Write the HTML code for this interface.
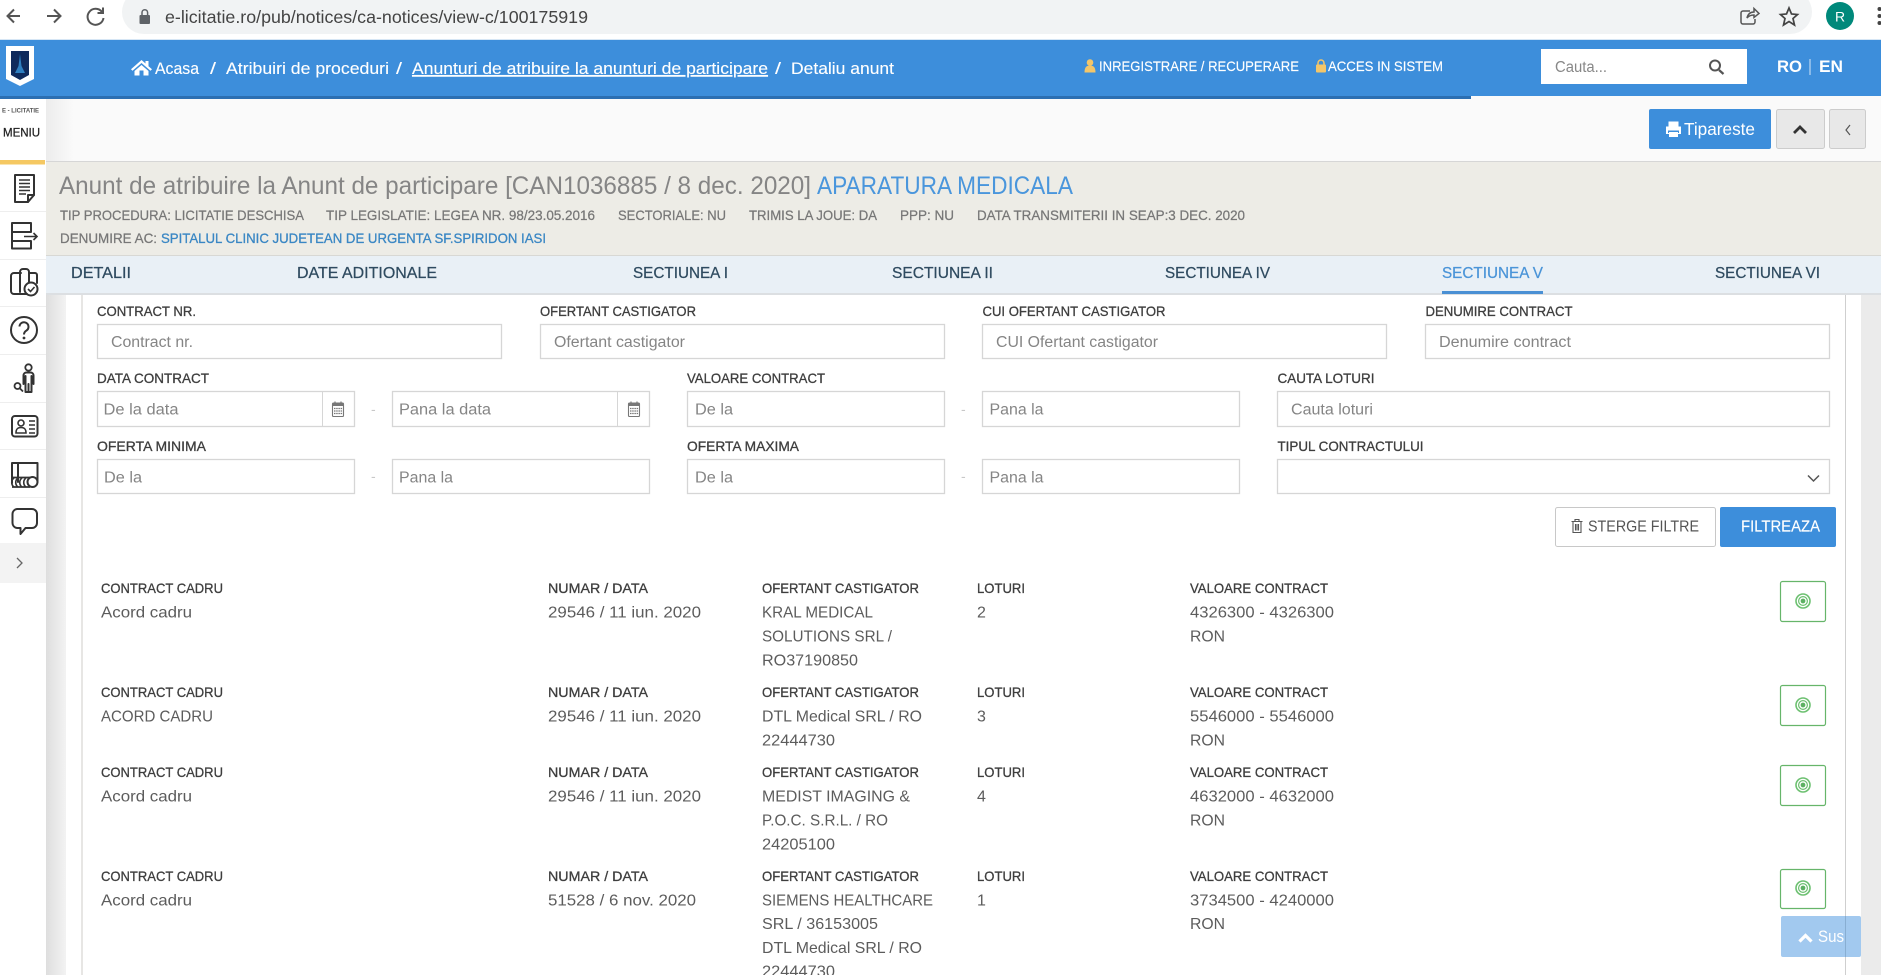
<!DOCTYPE html>
<html lang="ro">
<head>
<meta charset="utf-8">
<title>Detaliu anunt</title>
<style>
html,body{margin:0;padding:0;width:1881px;height:975px;overflow:hidden;background:#fff}
svg{display:block}
text{font-family:"Liberation Sans",sans-serif}
.b{fill:#fff;font-size:17px;stroke:#fff;stroke-width:.12}
.top{fill:#fff;font-size:14px;stroke:#fff;stroke-width:.15}
.i{fill:#777;font-size:14px;stroke:#777;stroke-width:.25}
.tab{fill:#2f4b60;font-size:16px;stroke:#2f4b60;stroke-width:.25}
.l{fill:#3e3e3e;font-size:14px;stroke:#3e3e3e;stroke-width:.3}
.v{fill:#5c5c5c;font-size:16px}
.p{fill:#858585;font-size:15.5px}
.box{fill:#fff;stroke:#d6d6d6;stroke-width:1.3}
.g{fill:#fff;stroke:#66b56a;stroke-width:1.2}
.ic{fill:none;stroke:#333;stroke-width:2;stroke-linejoin:round;stroke-linecap:round}
.sep{stroke:#eee;stroke-width:1}
</style>
</head>
<body>
<svg width="1881" height="975" viewBox="0 0 1881 975" xmlns="http://www.w3.org/2000/svg">
<defs>
<linearGradient id="gut" x1="0" x2="1" y1="0" y2="0"><stop offset="0" stop-color="#dedede"/><stop offset="1" stop-color="#f3f3f3"/></linearGradient>
<linearGradient id="tb" x1="0" x2="1" y1="0" y2="0"><stop offset="0" stop-color="#ececec"/><stop offset=".015" stop-color="#fafafa"/><stop offset="1" stop-color="#fafafa"/></linearGradient>
<g id="tgt"><circle r="7" fill="none" stroke="#6cc070" stroke-width="1.6"/><circle r="4.4" fill="none" stroke="#6cc070" stroke-width="1.2"/><circle r="2.4" fill="#5cb062"/></g>
<g id="cal"><rect x="332.500" y="403" width="11" height="13.500" rx="1" fill="none" stroke="#777" stroke-width="1.100"/><rect x="332.500" y="403" width="11" height="3" fill="#777"/><path d="M334 408.500H342.500M334 411H342.500M334 413.500H342.500" stroke="#777" stroke-width="1.300" stroke-dasharray="1.500 .7"/><path d="M335 403V401.500M341 403V401.500" stroke="#777" stroke-width="1.200"/></g>
</defs>

<!-- browser chrome -->
<rect width="1881" height="40" fill="#fff"/>
<rect x="122" y="-10" width="1690" height="44" rx="22" fill="#f1f3f4"/>
<path d="M20 16H8M14 9.500L7.500 16L14 22.500" fill="none" stroke="#555" stroke-width="2"/>
<path d="M47 16H60M54 9.500L60.500 16L54 22.500" fill="none" stroke="#555" stroke-width="2"/>
<path d="M102 12A8 8 0 1 0 103.500 18M103 7.500V13H97.500" fill="none" stroke="#555" stroke-width="2"/>
<rect x="139.500" y="15" width="10.500" height="9" rx="1" fill="#5f6368"/><path d="M142 15V12.500a2.800 2.800 0 0 1 5.600 0V15" fill="none" stroke="#5f6368" stroke-width="1.500"/>
<text x="165" y="23" textLength="423" lengthAdjust="spacingAndGlyphs" font-size="17.500" fill="#444">e-licitatie.ro/pub/notices/ca-notices/view-c/100175919</text>
<path d="M1750 11H1743a2 2 0 0 0-2 2V22a2 2 0 0 0 2 2H1753a2 2 0 0 0 2-2V19M1747 18C1748 13.500 1751 12 1754 12V8.500L1759 13.500L1754 17.500V15C1751 15 1749 15.500 1747 18Z" fill="none" stroke="#555" stroke-width="1.500"/>
<path d="M1789 8L1791.500 14L1797.500 14.500L1793 18.500L1794.500 25L1789 21.500L1783.500 25L1785 18.500L1780.500 14.500L1786.500 14Z" fill="none" stroke="#444" stroke-width="1.700"/>
<circle cx="1840" cy="16" r="14" fill="#00897b"/>
<text x="1840" y="21.500" text-anchor="middle" font-size="14" fill="#fff">R</text>
<circle cx="1879.500" cy="9" r="2" fill="#444"/><circle cx="1879.500" cy="16" r="2" fill="#444"/><circle cx="1879.500" cy="23" r="2" fill="#444"/>

<!-- blue header -->
<rect y="39" width="1881" height="1" fill="#d6e6f5"/>
<rect y="40" width="1881" height="56" fill="#3d8edb"/>
<rect y="96" width="1471" height="3" fill="#2c6fb2"/>
<path d="M6 46H34V79L20 86L6 79Z" fill="#fff"/>
<path d="M11 51H29V75L20 80L11 75Z" fill="#0f2a5c"/>
<path d="M20 54L21.500 66L25 73H15L18.500 66Z" fill="#2f7fc0"/>
<path d="M141.500 60L145.500 63.500V61H148.500V66.200L152 69.300L150.500 70.800L141.500 63L132.500 70.800L131 69.300Z M134.500 71L141.500 65L148.500 71V75.500H143.500V70.500H139.500V75.500H134.500Z" fill="#fff"/>
<text class="b" x="155" y="74" textLength="44" lengthAdjust="spacingAndGlyphs">Acasa</text>
<text class="b" x="210" y="74" textLength="6" lengthAdjust="spacingAndGlyphs">/</text>
<text class="b" x="226" y="74" textLength="163" lengthAdjust="spacingAndGlyphs">Atribuiri de proceduri</text>
<text class="b" x="396" y="74" textLength="6" lengthAdjust="spacingAndGlyphs">/</text>
<text class="b" x="412" y="74" textLength="356" lengthAdjust="spacingAndGlyphs" text-decoration="underline">Anunturi de atribuire la anunturi de participare</text>
<text class="b" x="775" y="74" textLength="6" lengthAdjust="spacingAndGlyphs">/</text>
<text class="b" x="791" y="74" textLength="103" lengthAdjust="spacingAndGlyphs">Detaliu anunt</text>

<circle cx="1090" cy="62.500" r="3.300" fill="#f3c66a"/><path d="M1084.500 72.500C1084.500 67 1086.500 65.500 1090 65.500C1093.500 65.500 1095.500 67 1095.500 72.500Z" fill="#f3c66a"/>
<text class="top" x="1099" y="71" textLength="200" lengthAdjust="spacingAndGlyphs">INREGISTRARE / RECUPERARE</text>
<rect x="1316" y="64.500" width="10" height="8" rx="1" fill="#f3c66a"/><path d="M1318 65V63a3 3 0 0 1 6 0V65" fill="none" stroke="#f3c66a" stroke-width="1.500"/>
<text class="top" x="1328" y="71" textLength="115" lengthAdjust="spacingAndGlyphs">ACCES IN SISTEM</text>
<rect x="1541" y="49" width="206" height="35" fill="#fff"/>
<text x="1555" y="72" textLength="52" lengthAdjust="spacingAndGlyphs" font-size="15.500" fill="#888">Cauta...</text>
<circle cx="1715" cy="65.500" r="5" fill="none" stroke="#555" stroke-width="2"/><path d="M1719 70L1723.500 74" stroke="#555" stroke-width="2.200"/>
<text x="1777" y="72" textLength="25" lengthAdjust="spacingAndGlyphs" font-size="17" font-weight="700" fill="#fff">RO</text>
<rect x="1809.500" y="59" width="1" height="16" fill="#d5e6f7"/>
<text x="1819" y="72" textLength="24" lengthAdjust="spacingAndGlyphs" font-size="17" font-weight="700" fill="#fff">EN</text>

<!-- sidebar and gutters backgrounds -->
<rect x="46" y="99" width="1835" height="63" fill="url(#tb)"/>
<rect x="1471" y="96" width="410" height="3" fill="#fafafa"/>
<rect x="46" y="161" width="1835" height="1.500" fill="#d6d6d6"/>
<rect x="46" y="295" width="20" height="680" fill="url(#gut)"/>
<rect x="66" y="295" width="1795" height="680" fill="#fff"/>
<rect x="1861" y="295" width="20" height="680" fill="#ebebeb"/>
<rect x="81.500" y="293" width="1" height="682" fill="#cfcdc8"/>
<rect x="1845" y="293" width="1" height="682" fill="#cfcfcf"/>

<!-- toolbar -->
<rect x="1649" y="109" width="122" height="40" rx="2" fill="#3d8edb"/>
<path d="M1669 127V122H1678V127M1666.500 127H1680.500V133.500H1666.500Z" fill="#fff" stroke="#fff" stroke-width="1"/>
<rect x="1668" y="130.500" width="11" height="2.500" fill="#3d8edb"/>
<rect x="1669" y="132" width="9" height="5" fill="#fff"/>
<text x="1684" y="135" textLength="71" lengthAdjust="spacingAndGlyphs" font-size="17.500" fill="#fff">Tipareste</text>
<rect x="1776.500" y="109.500" width="48" height="39" rx="2" fill="#e8e8e8" stroke="#ccc"/>
<path d="M1794 133L1800 127L1806 133" fill="none" stroke="#333" stroke-width="2.800"/>
<rect x="1829.500" y="109.500" width="36" height="39" rx="2" fill="#e8e8e8" stroke="#ccc"/>
<path d="M1850 125L1846 130L1850 135" fill="none" stroke="#555" stroke-width="1.200"/>

<!-- title bar -->
<rect x="46" y="162" width="1835" height="93" fill="#edece6"/>
<text x="59" y="194" textLength="752" lengthAdjust="spacingAndGlyphs" font-size="25" fill="#858585">Anunt de atribuire la Anunt de participare [CAN1036885 / 8 dec. 2020]</text>
<text x="817" y="194" textLength="256" lengthAdjust="spacingAndGlyphs" font-size="25" fill="#4a96dc">APARATURA MEDICALA</text>
<text class="i" x="60" y="220" textLength="244" lengthAdjust="spacingAndGlyphs">TIP PROCEDURA: LICITATIE DESCHISA</text>
<text class="i" x="326" y="220" textLength="269" lengthAdjust="spacingAndGlyphs">TIP LEGISLATIE: LEGEA NR. 98/23.05.2016</text>
<text class="i" x="618" y="220" textLength="108" lengthAdjust="spacingAndGlyphs">SECTORIALE: NU</text>
<text class="i" x="749" y="220" textLength="128" lengthAdjust="spacingAndGlyphs">TRIMIS LA JOUE: DA</text>
<text class="i" x="900" y="220" textLength="54" lengthAdjust="spacingAndGlyphs">PPP: NU</text>
<text class="i" x="977" y="220" textLength="268" lengthAdjust="spacingAndGlyphs">DATA TRANSMITERII IN SEAP:3 DEC. 2020</text>
<text class="i" x="60" y="243" textLength="97" lengthAdjust="spacingAndGlyphs">DENUMIRE AC:</text>
<text x="161" y="243" textLength="385" lengthAdjust="spacingAndGlyphs" font-size="14" fill="#3a87c4" stroke="#3a87c4" stroke-width=".3">SPITALUL CLINIC JUDETEAN DE URGENTA SF.SPIRIDON IASI</text>

<!-- tabs -->
<rect x="46" y="255" width="1835" height="1" fill="#d8d8d4"/>
<rect x="46" y="256" width="1835" height="37" fill="#e9f0f6"/>
<rect x="46" y="293" width="1835" height="2" fill="#dcdfe2"/>
<text class="tab" x="71" y="278" textLength="60" lengthAdjust="spacingAndGlyphs">DETALII</text>
<text class="tab" x="297" y="278" textLength="140" lengthAdjust="spacingAndGlyphs">DATE ADITIONALE</text>
<text class="tab" x="633" y="278" textLength="95" lengthAdjust="spacingAndGlyphs">SECTIUNEA I</text>
<text class="tab" x="892" y="278" textLength="101" lengthAdjust="spacingAndGlyphs">SECTIUNEA II</text>
<text class="tab" x="1165" y="278" textLength="105" lengthAdjust="spacingAndGlyphs">SECTIUNEA IV</text>
<text x="1442" y="278" textLength="101" lengthAdjust="spacingAndGlyphs" font-size="16" fill="#4a94d8" stroke="#4a94d8" stroke-width=".25">SECTIUNEA V</text>
<text class="tab" x="1715" y="278" textLength="105" lengthAdjust="spacingAndGlyphs">SECTIUNEA VI</text>
<rect x="1442" y="291" width="101" height="3" fill="#4a90d4"/>

<!-- sidebar -->
<rect x="0" y="99" width="46" height="876" fill="#fff"/>
<text x="2" y="112.500" textLength="37" lengthAdjust="spacingAndGlyphs" font-size="6" font-weight="700" fill="#555">E - LICITATIE</text>
<text x="3" y="136.500" textLength="37" lengthAdjust="spacingAndGlyphs" font-size="11.500" fill="#222" stroke="#222" stroke-width=".25">MENIU</text>
<rect x="0" y="160" width="45" height="4.500" fill="#f5c862"/>
<path class="sep" d="M0 211.500H46M0 259.500H46M0 306.500H46M0 354.500H46M0 402.500H46M0 449.500H46M0 497.500H46"/>
<rect x="0" y="543" width="46" height="40" fill="#f3f3f3"/>
<path d="M17 558L22 563L17 568" fill="none" stroke="#666" stroke-width="1.300"/>
<!-- icon 1 doc -->
<path class="ic" d="M15 175H34V195L28 202H15Z"/><path class="ic" d="M28 202V195H34" stroke-width="1.500"/>
<path d="M19 180H30M19 183.500H30M19 187H30M19 190.500H30M19 194H26" stroke="#333" stroke-width="1.500"/>
<!-- icon 2 -->
<path class="ic" d="M12 223H31V232H12ZM12 232H29M12 232V241H29M12 241V248.500H31V241H29"/>
<path d="M24 236.500H37M33.500 233L37 236.500L33.500 240" fill="none" stroke="#333" stroke-width="1.600"/>
<!-- icon 3 -->
<path class="ic" d="M21 273H14A3 3 0 0 0 11 276V291A3 3 0 0 0 14 294H27M29 273H35A2 2 0 0 1 37 275V283"/>
<path class="ic" d="M20 292V272A3 3 0 0 1 23 269H26A3 3 0 0 1 29 272V282"/>
<circle class="ic" cx="31" cy="289" r="6.500"/><path d="M28 289L30.500 291.500L34.500 287" fill="none" stroke="#333" stroke-width="1.600"/>
<!-- icon 4 -->
<circle cx="24" cy="330" r="13" fill="none" stroke="#333" stroke-width="2"/>
<path d="M19.500 326.500A4.500 4.500 0 1 1 26.500 330.500C24.800 331.500 24 332.500 24 334.500" fill="none" stroke="#333" stroke-width="2"/><circle cx="24" cy="338" r="1.400" fill="#333"/>
<!-- icon 5 -->
<circle cx="28.500" cy="367.500" r="3.200" fill="none" stroke="#333" stroke-width="1.800"/>
<path class="ic" d="M23.500 384V375.500A3 3 0 0 1 26.500 372.500H30.500A3 3 0 0 1 33.500 375.500V384M25.500 376V392H31.500V376M28.500 384V392" stroke-width="1.700"/>
<circle cx="17.500" cy="386" r="3" fill="none" stroke="#333" stroke-width="1.800"/><path d="M20 388.500L23 391.500" stroke="#333" stroke-width="1.800"/>
<!-- icon 6 -->
<rect class="ic" x="12" y="416" width="25.500" height="20.500" rx="3"/>
<circle cx="21" cy="423" r="3" fill="none" stroke="#333" stroke-width="1.600"/>
<path d="M16 433C16 428.500 18 427.500 21 427.500C24 427.500 26 428.500 26 433Z" fill="none" stroke="#333" stroke-width="1.600"/>
<path d="M29 421H35M29 425H35M29 429H35M29 433H35" stroke="#333" stroke-width="1.500"/>
<!-- icon 7 -->
<path class="ic" d="M12 483V463H37.500V482M18 463V482"/>
<path d="M12 477.500H30" stroke="#333" stroke-width="1.800"/>
<path d="M14 478C11 480 11 485 14 487M18 478C15 480 15 485 18 487M22 478C19 480 19 485 22 487M26 478C23 480 23 485 26 487" fill="none" stroke="#333" stroke-width="1.600"/>
<circle cx="32.500" cy="482" r="5" fill="none" stroke="#333" stroke-width="2"/>
<path d="M12 487H30" stroke="#333" stroke-width="1.800"/>
<!-- icon 8 -->
<path class="ic" d="M17 509H32A5 5 0 0 1 37 514V523A5 5 0 0 1 32 528H25.500L20.500 534V528H17A5 5 0 0 1 12.500 523V514A5 5 0 0 1 17 509Z"/>

<!-- filter row 1 -->
<text class="l" x="97" y="316" textLength="99" lengthAdjust="spacingAndGlyphs">CONTRACT NR.</text>
<text class="l" x="540" y="316" textLength="156" lengthAdjust="spacingAndGlyphs">OFERTANT CASTIGATOR</text>
<text class="l" x="982.500" y="316" textLength="183" lengthAdjust="spacingAndGlyphs">CUI OFERTANT CASTIGATOR</text>
<text class="l" x="1425.500" y="316" textLength="147" lengthAdjust="spacingAndGlyphs">DENUMIRE CONTRACT</text>
<rect class="box" x="97.500" y="324.500" width="404" height="34"/>
<rect class="box" x="540.500" y="324.500" width="404" height="34"/>
<rect class="box" x="982.500" y="324.500" width="404" height="34"/>
<rect class="box" x="1425.500" y="324.500" width="404" height="34"/>
<text class="p" x="111" y="347" textLength="82" lengthAdjust="spacingAndGlyphs">Contract nr.</text>
<text class="p" x="554" y="347" textLength="131" lengthAdjust="spacingAndGlyphs">Ofertant castigator</text>
<text class="p" x="996" y="347" textLength="162" lengthAdjust="spacingAndGlyphs">CUI Ofertant castigator</text>
<text class="p" x="1439" y="347" textLength="132" lengthAdjust="spacingAndGlyphs">Denumire contract</text>

<!-- filter row 2 -->
<text class="l" x="97" y="383" textLength="112" lengthAdjust="spacingAndGlyphs">DATA CONTRACT</text>
<text class="l" x="687" y="383" textLength="138" lengthAdjust="spacingAndGlyphs">VALOARE CONTRACT</text>
<text class="l" x="1277.500" y="383" textLength="97" lengthAdjust="spacingAndGlyphs">CAUTA LOTURI</text>
<rect class="box" x="97.500" y="391.500" width="257" height="35"/>
<path d="M322.500 392V426" stroke="#d6d6d6"/>
<rect class="box" x="392.500" y="391.500" width="257" height="35"/>
<path d="M617.500 392V426" stroke="#d6d6d6"/>
<rect class="box" x="687.500" y="391.500" width="257" height="35"/>
<rect class="box" x="982.500" y="391.500" width="257" height="35"/>
<rect class="box" x="1277.500" y="391.500" width="552" height="35"/>
<use href="#cal"/>
<use href="#cal" x="296"/>
<text x="371" y="414" font-size="14" fill="#c8c8c8">-</text>
<text x="961" y="414" font-size="14" fill="#c8c8c8">-</text>
<text class="p" x="103.500" y="414.500" textLength="75" lengthAdjust="spacingAndGlyphs">De la data</text>
<text class="p" x="399" y="414.500" textLength="92" lengthAdjust="spacingAndGlyphs">Pana la data</text>
<text class="p" x="695" y="414.500" textLength="38" lengthAdjust="spacingAndGlyphs">De la</text>
<text class="p" x="989.500" y="414.500" textLength="54" lengthAdjust="spacingAndGlyphs">Pana la</text>
<text class="p" x="1291" y="414.500" textLength="82" lengthAdjust="spacingAndGlyphs">Cauta loturi</text>

<!-- filter row 3 -->
<text class="l" x="97" y="451" textLength="109" lengthAdjust="spacingAndGlyphs">OFERTA MINIMA</text>
<text class="l" x="687" y="451" textLength="112" lengthAdjust="spacingAndGlyphs">OFERTA MAXIMA</text>
<text class="l" x="1277.500" y="451" textLength="146" lengthAdjust="spacingAndGlyphs">TIPUL CONTRACTULUI</text>
<rect class="box" x="97.500" y="459.500" width="257" height="34"/>
<rect class="box" x="392.500" y="459.500" width="257" height="34"/>
<rect class="box" x="687.500" y="459.500" width="257" height="34"/>
<rect class="box" x="982.500" y="459.500" width="257" height="34"/>
<rect class="box" x="1277.500" y="459.500" width="552" height="34"/>
<text x="371" y="481" font-size="14" fill="#c8c8c8">-</text>
<text x="961" y="481" font-size="14" fill="#c8c8c8">-</text>
<text class="p" x="104" y="482.500" textLength="38" lengthAdjust="spacingAndGlyphs">De la</text>
<text class="p" x="399" y="482.500" textLength="54" lengthAdjust="spacingAndGlyphs">Pana la</text>
<text class="p" x="695" y="482.500" textLength="38" lengthAdjust="spacingAndGlyphs">De la</text>
<text class="p" x="989.500" y="482.500" textLength="54" lengthAdjust="spacingAndGlyphs">Pana la</text>
<path d="M1808 475.500L1813.500 481L1819 475.500" fill="none" stroke="#555" stroke-width="1.500"/>

<!-- buttons -->
<rect x="1555.500" y="507.500" width="160" height="39" rx="2" fill="#fff" stroke="#c8c8c8"/>
<path d="M1571.500 521.500H1582.500M1573 521.500V532.500H1581V521.500M1575 521V519.500H1579V521M1575.500 524V530.500M1577 524V530.500M1578.500 524V530.500" fill="none" stroke="#555" stroke-width="1.100"/>
<text x="1588" y="531.500" textLength="111" lengthAdjust="spacingAndGlyphs" font-size="16" fill="#555">STERGE FILTRE</text>
<rect x="1720" y="507" width="116" height="40" rx="2" fill="#3d8edb"/>
<text x="1741" y="531.500" textLength="79" lengthAdjust="spacingAndGlyphs" font-size="16" fill="#fff" stroke="#fff" stroke-width=".15">FILTREAZA</text>

<!-- row 1 -->
<text class="l" x="101" y="593" textLength="122" lengthAdjust="spacingAndGlyphs">CONTRACT CADRU</text>
<text class="v" x="101" y="617.500" textLength="91" lengthAdjust="spacingAndGlyphs">Acord cadru</text>
<text class="l" x="548" y="593" textLength="100" lengthAdjust="spacingAndGlyphs">NUMAR / DATA</text>
<text class="v" x="548" y="617.500" textLength="153" lengthAdjust="spacingAndGlyphs">29546 / 11 iun. 2020</text>
<text class="l" x="762" y="593" textLength="157" lengthAdjust="spacingAndGlyphs">OFERTANT CASTIGATOR</text>
<text class="v" x="762" y="617.500" textLength="111" lengthAdjust="spacingAndGlyphs">KRAL MEDICAL</text>
<text class="v" x="762" y="641.500" textLength="130" lengthAdjust="spacingAndGlyphs">SOLUTIONS SRL /</text>
<text class="v" x="762" y="665.500" textLength="96" lengthAdjust="spacingAndGlyphs">RO37190850</text>
<text class="l" x="977" y="593" textLength="48" lengthAdjust="spacingAndGlyphs">LOTURI</text>
<text class="v" x="977" y="617.500">2</text>
<text class="l" x="1190" y="593" textLength="138" lengthAdjust="spacingAndGlyphs">VALOARE CONTRACT</text>
<text class="v" x="1190" y="617.500" textLength="144" lengthAdjust="spacingAndGlyphs">4326300 - 4326300</text>
<text class="v" x="1190" y="641.500" textLength="35" lengthAdjust="spacingAndGlyphs">RON</text>
<rect class="g" x="1780.500" y="581.500" width="45" height="40" rx="2"/>
<use href="#tgt" x="1803" y="601"/>

<!-- row 2 -->
<text class="l" x="101" y="697" textLength="122" lengthAdjust="spacingAndGlyphs">CONTRACT CADRU</text>
<text class="v" x="101" y="721.500" textLength="112" lengthAdjust="spacingAndGlyphs">ACORD CADRU</text>
<text class="l" x="548" y="697" textLength="100" lengthAdjust="spacingAndGlyphs">NUMAR / DATA</text>
<text class="v" x="548" y="721.500" textLength="153" lengthAdjust="spacingAndGlyphs">29546 / 11 iun. 2020</text>
<text class="l" x="762" y="697" textLength="157" lengthAdjust="spacingAndGlyphs">OFERTANT CASTIGATOR</text>
<text class="v" x="762" y="721.500" textLength="160" lengthAdjust="spacingAndGlyphs">DTL Medical SRL / RO</text>
<text class="v" x="762" y="745.500" textLength="73" lengthAdjust="spacingAndGlyphs">22444730</text>
<text class="l" x="977" y="697" textLength="48" lengthAdjust="spacingAndGlyphs">LOTURI</text>
<text class="v" x="977" y="721.500">3</text>
<text class="l" x="1190" y="697" textLength="138" lengthAdjust="spacingAndGlyphs">VALOARE CONTRACT</text>
<text class="v" x="1190" y="721.500" textLength="144" lengthAdjust="spacingAndGlyphs">5546000 - 5546000</text>
<text class="v" x="1190" y="745.500" textLength="35" lengthAdjust="spacingAndGlyphs">RON</text>
<rect class="g" x="1780.500" y="685.500" width="45" height="40" rx="2"/>
<use href="#tgt" x="1803" y="705"/>

<!-- row 3 -->
<text class="l" x="101" y="777" textLength="122" lengthAdjust="spacingAndGlyphs">CONTRACT CADRU</text>
<text class="v" x="101" y="801.500" textLength="91" lengthAdjust="spacingAndGlyphs">Acord cadru</text>
<text class="l" x="548" y="777" textLength="100" lengthAdjust="spacingAndGlyphs">NUMAR / DATA</text>
<text class="v" x="548" y="801.500" textLength="153" lengthAdjust="spacingAndGlyphs">29546 / 11 iun. 2020</text>
<text class="l" x="762" y="777" textLength="157" lengthAdjust="spacingAndGlyphs">OFERTANT CASTIGATOR</text>
<text class="v" x="762" y="801.500" textLength="148" lengthAdjust="spacingAndGlyphs">MEDIST IMAGING &amp;</text>
<text class="v" x="762" y="825.500" textLength="126" lengthAdjust="spacingAndGlyphs">P.O.C. S.R.L. / RO</text>
<text class="v" x="762" y="849.500" textLength="73" lengthAdjust="spacingAndGlyphs">24205100</text>
<text class="l" x="977" y="777" textLength="48" lengthAdjust="spacingAndGlyphs">LOTURI</text>
<text class="v" x="977" y="801.500">4</text>
<text class="l" x="1190" y="777" textLength="138" lengthAdjust="spacingAndGlyphs">VALOARE CONTRACT</text>
<text class="v" x="1190" y="801.500" textLength="144" lengthAdjust="spacingAndGlyphs">4632000 - 4632000</text>
<text class="v" x="1190" y="825.500" textLength="35" lengthAdjust="spacingAndGlyphs">RON</text>
<rect class="g" x="1780.500" y="765.500" width="45" height="40" rx="2"/>
<use href="#tgt" x="1803" y="785"/>

<!-- row 4 -->
<text class="l" x="101" y="881" textLength="122" lengthAdjust="spacingAndGlyphs">CONTRACT CADRU</text>
<text class="v" x="101" y="905.500" textLength="91" lengthAdjust="spacingAndGlyphs">Acord cadru</text>
<text class="l" x="548" y="881" textLength="100" lengthAdjust="spacingAndGlyphs">NUMAR / DATA</text>
<text class="v" x="548" y="905.500" textLength="148" lengthAdjust="spacingAndGlyphs">51528 / 6 nov. 2020</text>
<text class="l" x="762" y="881" textLength="157" lengthAdjust="spacingAndGlyphs">OFERTANT CASTIGATOR</text>
<text class="v" x="762" y="905.500" textLength="171" lengthAdjust="spacingAndGlyphs">SIEMENS HEALTHCARE</text>
<text class="v" x="762" y="929" textLength="116" lengthAdjust="spacingAndGlyphs">SRL / 36153005</text>
<text class="v" x="762" y="953" textLength="160" lengthAdjust="spacingAndGlyphs">DTL Medical SRL / RO</text>
<text class="v" x="762" y="976.500" textLength="73" lengthAdjust="spacingAndGlyphs">22444730</text>
<text class="l" x="977" y="881" textLength="48" lengthAdjust="spacingAndGlyphs">LOTURI</text>
<text class="v" x="977" y="905.500">1</text>
<text class="l" x="1190" y="881" textLength="138" lengthAdjust="spacingAndGlyphs">VALOARE CONTRACT</text>
<text class="v" x="1190" y="905.500" textLength="144" lengthAdjust="spacingAndGlyphs">3734500 - 4240000</text>
<text class="v" x="1190" y="929" textLength="35" lengthAdjust="spacingAndGlyphs">RON</text>
<rect class="g" x="1780.500" y="869.500" width="45" height="39" rx="2"/>
<use href="#tgt" x="1803" y="888"/>

<!-- back to top -->
<rect x="1781" y="916" width="80" height="41" rx="2" fill="#a2c9ef"/>
<path d="M1799.500 941.500L1805.500 935.500L1811.500 941.500" fill="none" stroke="#fff" stroke-width="3.200"/>
<text x="1818" y="942" textLength="26" lengthAdjust="spacingAndGlyphs" font-size="17" fill="#fff">Sus</text>
<rect x="1845" y="916" width="1" height="41" fill="#88aed2"/>
</svg>
</body>
</html>
